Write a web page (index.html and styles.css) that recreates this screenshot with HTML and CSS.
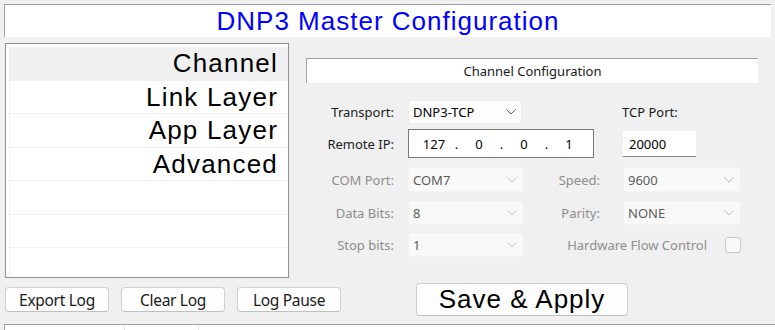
FILE: index.html
```html
<!DOCTYPE html>
<html>
<head>
    <title>DNP3 Master Configuration</title>
    <link rel="stylesheet" href="styles.css">
</head>
<body>
    <div class="header">
        <h1>DNP3 Master Configuration</h1>
    </div>

    <div class="main">
        <ul class="nav">
            <li class="selected">Channel</li>
            <li>Link Layer</li>
            <li>App Layer</li>
            <li>Advanced</li>
            <li></li>
            <li></li>
            <li></li>
        </ul>

        <div class="panel">
            <div class="panel-title">Channel Configuration</div>

            <div class="row row-transport">
                <label>Transport:</label>
                <div class="combo">
                    <span>DNP3-TCP</span>
                    <svg width="10" height="6" viewBox="0 0 10 6"><path d="M0.5 0.5 L5 5 L9.5 0.5" /></svg>
                </div>
                <span></span>
                <label class="left">TCP Port:</label>
            </div>

            <div class="row row-ip">
                <label>Remote IP:</label>
                <div class="ip-box">
                    <span class="octet">127</span><span class="dot">.</span>
                    <span class="octet">0</span><span class="dot">.</span>
                    <span class="octet">0</span><span class="dot">.</span>
                    <span class="octet">1</span>
                </div>
                <div class="text-input">20000</div>
            </div>

            <div class="row row-com disabled">
                <label>COM Port:</label>
                <div class="combo">
                    <span>COM7</span>
                    <svg width="10" height="6" viewBox="0 0 10 6"><path d="M0.5 0.5 L5 5 L9.5 0.5" /></svg>
                </div>
                <label class="mid">Speed:</label>
                <div class="combo">
                    <span>9600</span>
                    <svg width="10" height="6" viewBox="0 0 10 6"><path d="M0.5 0.5 L5 5 L9.5 0.5" /></svg>
                </div>
            </div>

            <div class="row row-data disabled">
                <label>Data Bits:</label>
                <div class="combo">
                    <span>8</span>
                    <svg width="10" height="6" viewBox="0 0 10 6"><path d="M0.5 0.5 L5 5 L9.5 0.5" /></svg>
                </div>
                <label class="mid">Parity:</label>
                <div class="combo">
                    <span>NONE</span>
                    <svg width="10" height="6" viewBox="0 0 10 6"><path d="M0.5 0.5 L5 5 L9.5 0.5" /></svg>
                </div>
            </div>

            <div class="row row-stop disabled">
                <label>Stop bits:</label>
                <div class="combo">
                    <span>1</span>
                    <svg width="10" height="6" viewBox="0 0 10 6"><path d="M0.5 0.5 L5 5 L9.5 0.5" /></svg>
                </div>
                <div class="flow">
                    <span>Hardware Flow Control</span>
                    <span class="checkbox"></span>
                </div>
            </div>
        </div>
    </div>

    <div class="actions">
        <button class="btn">Export Log</button>
        <button class="btn">Clear Log</button>
        <button class="btn">Log Pause</button>
        <button class="btn btn-big">Save &amp; Apply</button>
    </div>

    <div class="log">
        <div class="log-col col-1"></div>
        <div class="log-col col-2"></div>
    </div>
</body>
</html>
```

FILE: styles.css
```css
body {
    margin: 0;
    padding: 0;
    background-color: #f0f0f0;
    font-family: 'Noto Sans', 'Liberation Sans', sans-serif;
    font-size: 13px;
    color: #1a1a1a;
    width: 775px;
    height: 330px;
    overflow: hidden;
}
.header {
    margin: 4px 4px 0 4px;
    height: 32px;
    background-color: #fff;
    border-top: 1px solid #a0a0a0;
    border-left: 1px solid #a0a0a0;
}
h1 {
    margin: 0;
    font-family: 'Liberation Sans', Arial, sans-serif;
    font-weight: normal;
    font-size: 26px;
    letter-spacing: 1px;
    line-height: 32px;
    color: #0000ff;
    text-align: center;
}
.main {
    display: flex;
    margin-top: 6px;
    height: 235px;
}
.nav {
    list-style: none;
    margin: 0 0 0 5px;
    padding: 3px 0 0 3px;
    width: 284px;
    box-sizing: border-box;
    background-color: #fff;
    border: 1px solid #8c8f94;
    overflow: hidden;
}
.nav li {
    height: 33.5px;
    line-height: 33px;
    border-bottom: 1px solid #f0f0f0;
    border-left: 1px solid #f0f0f0;
    box-sizing: border-box;
    padding-right: 10px;
    text-align: right;
    font-family: 'Liberation Sans', Arial, sans-serif;
    font-size: 26px;
    letter-spacing: 1.2px;
    color: #000;
}
.nav li.selected {
    background-color: #f0f0f0;
}
.panel {
    flex: 1;
    padding: 15px 0 0 17px;
}
.panel-title {
    width: 452px;
    height: 25px;
    box-sizing: border-box;
    background-color: #fff;
    border-top: 1px solid #a0a0a0;
    border-left: 1px solid #a0a0a0;
    line-height: 24px;
    text-align: center;
    color: #1a1a1a;
}
.row {
    display: grid;
    grid-template-columns: 88px 116px 71px 118px;
    column-gap: 14px;
    align-items: center;
}
.row label {
    text-align: right;
}
.row label.left {
    text-align: left;
    margin-left: -1px;
}
.row label.mid {
    padding-right: 9px;
}
.row-transport {
    margin-top: 17px;
    height: 24px;
}
.row-ip {
    margin-top: 5px;
    height: 29px;
}
.row-com {
    margin-top: 9px;
    height: 25px;
}
.row-data {
    margin-top: 9px;
    height: 24px;
}
.row-stop {
    margin-top: 8px;
    height: 24px;
}
.combo {
    display: flex;
    align-items: center;
    justify-content: space-between;
    height: 100%;
    box-sizing: border-box;
    padding: 0 5px 0 4px;
    background-color: #fdfdfd;
    border: 1px solid #ececec;
    color: #000;
}
.row-transport .combo {
    width: 114px;
}
.combo svg path {
    fill: none;
    stroke: #606060;
    stroke-width: 1;
}
.disabled label,
.disabled .flow {
    color: #8d8d8d;
}
.disabled .combo {
    background-color: #f9f9f9;
    border-color: #f3f3f3;
    color: #5c5c5c;
    padding-right: 6px;
}
.disabled .combo svg path {
    stroke: #c4c4c4;
}
.ip-box {
    grid-column: 2 / 4;
    width: 186px;
    height: 29px;
    box-sizing: border-box;
    display: flex;
    align-items: center;
    padding-left: 8px;
    background-color: #fff;
    border: 1px solid #7a7a7a;
    color: #000;
}
.ip-box .octet {
    width: 34px;
    text-align: center;
}
.ip-box .dot {
    width: 11px;
    text-align: center;
}
.text-input {
    width: 73px;
    height: 27px;
    box-sizing: border-box;
    padding-left: 6px;
    line-height: 26px;
    background-color: #fff;
    border-bottom: 1px solid #8a8a8a;
    border-top: 1px solid #f4f4f4;
    color: #000;
}
.flow {
    grid-column: 3 / 5;
    display: flex;
    justify-content: flex-end;
    align-items: center;
    gap: 18px;
}
.checkbox {
    width: 16px;
    height: 16px;
    box-sizing: border-box;
    border: 1px solid #c8c8c8;
    border-radius: 3px;
    background-color: #f9f9f9;
}
.actions {
    display: flex;
    align-items: center;
    gap: 12px;
    margin-top: 5px;
    height: 33px;
    padding-left: 5px;
}
.btn {
    width: 104px;
    height: 25px;
    padding: 0;
    background-color: #fdfdfd;
    border: 1px solid #d0d0d0;
    border-bottom-color: #c0c0c0;
    border-radius: 4px;
    font-family: 'Noto Sans', 'Liberation Sans', sans-serif;
    font-size: 15.5px;
    letter-spacing: -0.3px;
    color: #1a1a1a;
}
.btn-big {
    width: 212px;
    height: 33px;
    margin-left: 63px;
    font-family: 'Liberation Sans', Arial, sans-serif;
    font-size: 26px;
    letter-spacing: 1px;
    color: #000;
}
.log {
    display: flex;
    margin: 8px 0 0 4px;
    height: 20px;
    background-color: #fff;
    border-top: 1px solid #a0a0a0;
    border-left: 1px solid #a0a0a0;
}
.log-col {
    height: 100%;
    border-right: 1px solid #e3e3e3;
    box-sizing: border-box;
}
.col-1 {
    width: 120px;
}
.col-2 {
    width: 74px;
}
```
